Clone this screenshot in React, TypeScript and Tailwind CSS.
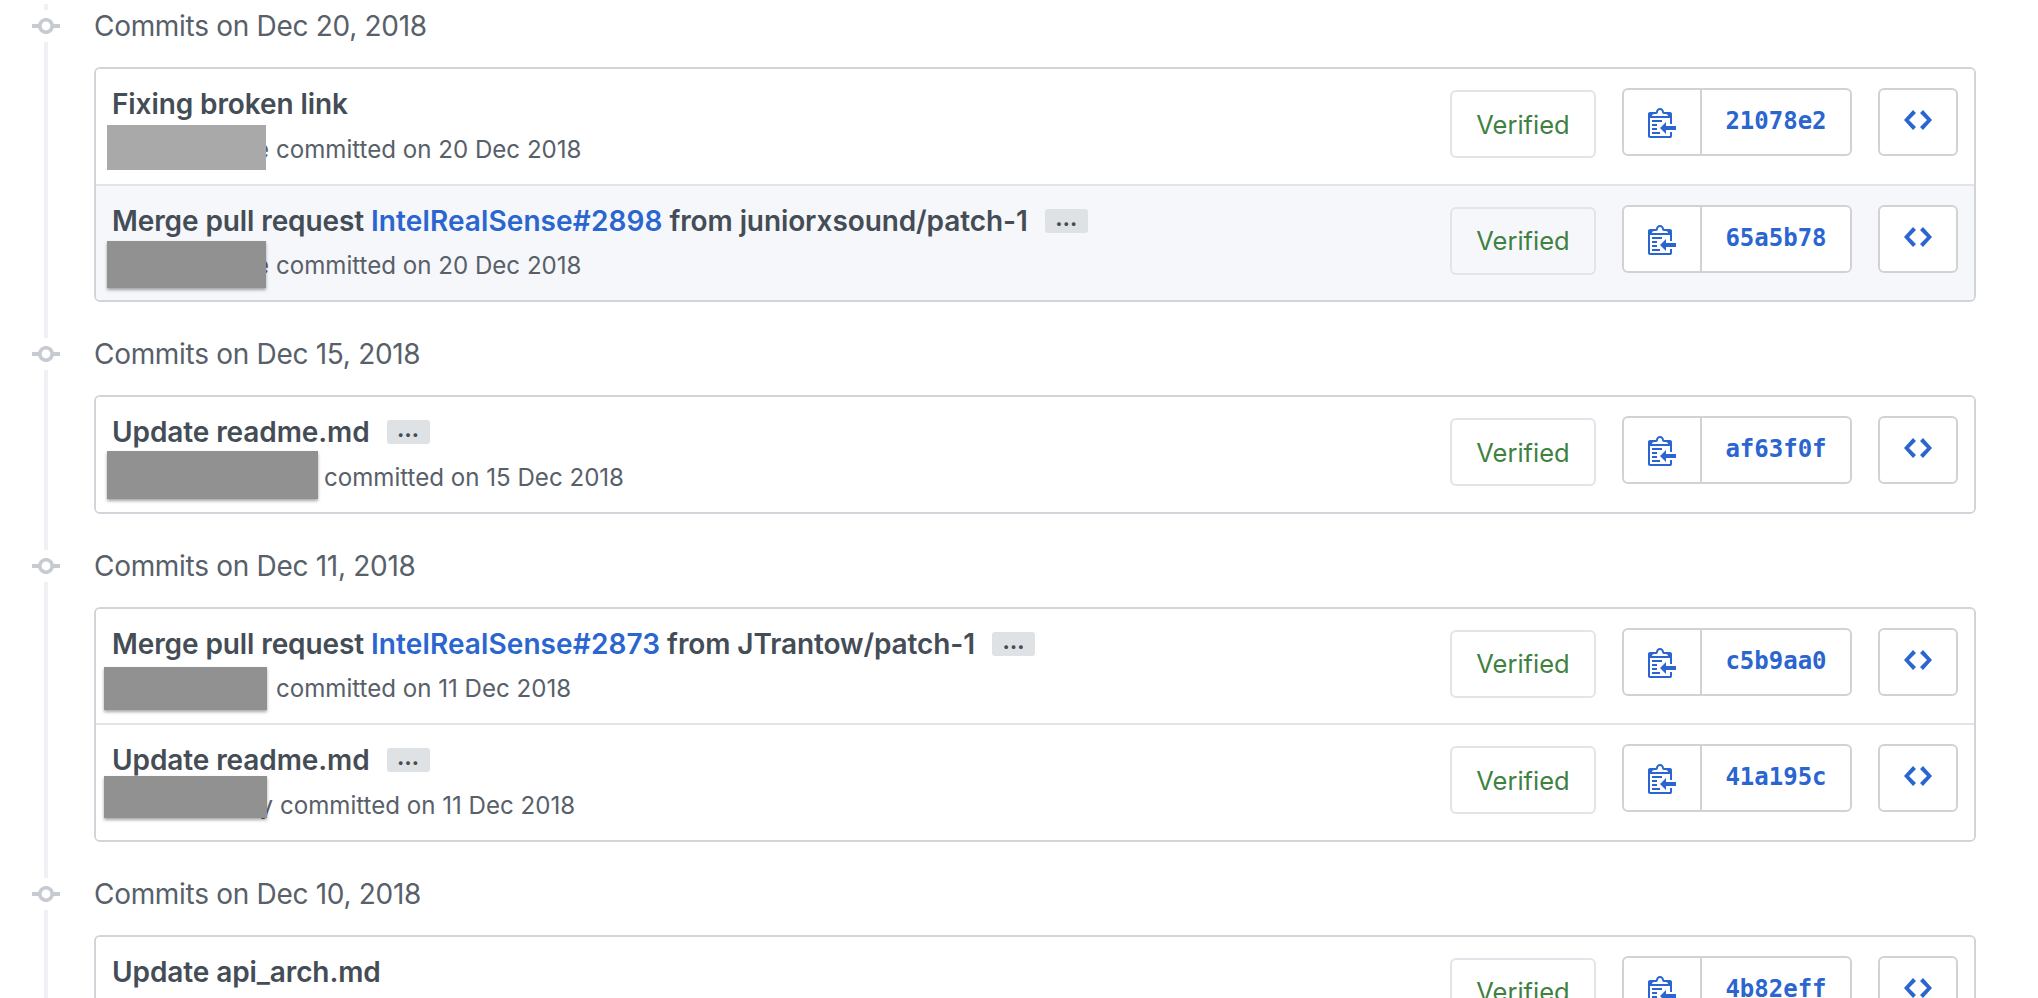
const sans = "font-['Inter','Noto_Sans',sans-serif]";

function CommitIcon() {
  return (
    <svg viewBox="0 0 14 16" className="w-[28px] h-[32px] fill-[#c6cbd1]">
      <path d="M10.86 7c-.45-1.72-2-3-3.86-3-1.86 0-3.41 1.28-3.86 3H0v2h3.14c.45 1.72 2 3 3.86 3 1.86 0 3.41-1.28 3.86-3H14V7h-3.14zM7 10.2c-1.22 0-2.2-.98-2.2-2.2 0-1.22.98-2.2 2.2-2.2 1.22 0 2.2.98 2.2 2.2 0 1.22-.98 2.2-2.2 2.2z" />
    </svg>
  );
}

function ClippyIcon() {
  return (
    <svg viewBox="0 0 14 16" className="w-[28px] h-[32px] fill-[#2a65d0]">
      <path d="M2 13h4v1H2v-1zm5-6H2v1h5V7zm2 3V8l-3 3 3 3v-2h5v-2H9zM4.5 9H2v1h2.5V9zM2 12h2.5v-1H2v1zm9 1h1v2c-.02.28-.11.52-.3.7-.19.18-.42.28-.7.3H1c-.55 0-1-.45-1-1V4c0-.55.45-1 1-1h3c0-1.11.89-2 2-2 1.11 0 2 .89 2 2h3c.55 0 1 .45 1 1v5h-1V6H1v9h10v-2zM2 5h8c0-.55-.45-1-1-1H8c-.55 0-1-.45-1-1s-.45-1-1-1-1 .45-1 1-.45 1-1 1H3c-.55 0-1 .45-1 1z" />
    </svg>
  );
}

function CodeIcon() {
  return (
    <svg viewBox="0 0 14 16" className="w-[28px] h-[32px] fill-[#2a65d0]">
      <path d="M9.5 3L8 4.5 11.5 8 8 11.5 9.5 13 14 8 9.5 3zm-5 0L0 8l4.5 5L6 11.5 2.5 8 6 4.5 4.5 3z" />
    </svg>
  );
}

type Row = {
  before?: string;
  pr?: string;
  after?: string;
  more?: boolean;
  sliver?: string;
  metaClass?: string;
  meta?: string;
  hash: string;
  redact?: string;
  shaded?: boolean;
};

const groups: { date: string; rows: Row[] }[] = [
  {
    date: "Dec 20, 2018",
    rows: [
      {
        before: "Fixing broken link",
        sliver: "e",
        metaClass: "w-[170px]",
        meta: "committed on 20 Dec 2018",
        hash: "21078e2",
        redact: "left-[11px] top-[56px] w-[159px] h-[45px] bg-[#a9a9a9]",
      },
      {
        before: "Merge pull request ",
        pr: "IntelRealSense#2898",
        after: " from juniorxsound/patch-1",
        more: true,
        sliver: "e",
        metaClass: "w-[170px]",
        meta: "committed on 20 Dec 2018",
        hash: "65a5b78",
        shaded: true,
        redact: "left-[11px] top-[55px] w-[159px] h-[47px] bg-[#919191] shadow-[0_2px_3px_rgba(0,0,0,0.35)]",
      },
    ],
  },
  {
    date: "Dec 15, 2018",
    rows: [
      {
        before: "Update readme.md",
        more: true,
        sliver: "",
        metaClass: "w-[218px]",
        meta: "committed on 15 Dec 2018",
        hash: "af63f0f",
        redact: "left-[11px] top-[54px] w-[211px] h-[48px] bg-[#919191] shadow-[0_2px_3px_rgba(0,0,0,0.35)]",
      },
    ],
  },
  {
    date: "Dec 11, 2018",
    rows: [
      {
        before: "Merge pull request ",
        pr: "IntelRealSense#2873",
        after: " from JTrantow/patch-1",
        more: true,
        sliver: "",
        metaClass: "w-[170px]",
        meta: "committed on 11 Dec 2018",
        hash: "c5b9aa0",
        redact: "left-[8px] top-[58px] w-[163px] h-[43px] bg-[#919191] shadow-[0_2px_3px_rgba(0,0,0,0.35)]",
      },
      {
        before: "Update readme.md",
        more: true,
        sliver: "y",
        metaClass: "w-[174px]",
        meta: "committed on 11 Dec 2018",
        hash: "41a195c",
        redact: "left-[8px] top-[51px] w-[163px] h-[42px] bg-[#919191] shadow-[0_2px_3px_rgba(0,0,0,0.35)]",
      },
    ],
  },
  {
    date: "Dec 10, 2018",
    rows: [{ before: "Update api_arch.md", sliver: "", metaClass: "w-[170px]", meta: "", hash: "4b82eff" }],
  },
];

function CommitRow({ row, last }: { row: Row; last: boolean }) {
  return (
    <div
      className={`relative flex items-start h-[114.5px] ${row.shaded ? "bg-[#f6f7fa]" : "bg-white"} ${
        last ? "" : "box-content border-b-2 border-[#e1e4e8]"
      }`}
    >
      <div className="pl-[16px] min-w-0">
        <div className="flex items-center h-[40px] mt-[15px] text-[28px] font-semibold text-[#444d56] whitespace-pre tracking-[-0.1px]">
          <span>
            {row.before}
            {row.pr && <span className="text-[#2a65d0] tracking-[0.1px]">{row.pr}</span>}
            {row.after}
          </span>
          {row.more && (
            <span className="ml-[17px] flex items-center justify-center w-[43px] h-[24px] rounded-[3px] bg-[#dfe2e5] text-[22px] font-bold leading-none pb-[6px]">
              …
            </span>
          )}
        </div>
        <div className="flex items-center h-[40px] mt-[6px] text-[24.1px] text-[#586069] whitespace-pre">
          <span className={`${row.metaClass} -ml-[6px] text-right pr-[7px]`}>{row.sliver}</span>
          <span>{row.meta}</span>
        </div>
      </div>
      {row.redact && <div className={`absolute ${row.redact}`} />}
      <div className="ml-auto flex items-start mt-[19px] mr-[16px]">
        <div className="flex items-center justify-center w-[146px] h-[68px] mt-[2px] pt-[2px] rounded-[6px] border-2 border-[#e1e4e8] text-[25.5px] text-[#3f8141]">
          Verified
        </div>
        <div className="ml-[26px] flex w-[230px] h-[68px] rounded-[6px] border-2 border-[#d2d2d2] bg-white">
          <div className="flex items-center justify-center w-[78px] border-r-2 border-[#d2d2d2]">
            <ClippyIcon />
          </div>
          <div className="flex-1 flex items-center justify-center pb-[2px] font-['DejaVu_Sans_Mono',monospace] font-bold text-[24px] text-[#2a65d0]">
            {row.hash}
          </div>
        </div>
        <div className="ml-[26px] flex items-center justify-center w-[80px] h-[68px] rounded-[6px] border-2 border-[#d2d2d2] bg-white pb-[4px]">
          <CodeIcon />
        </div>
      </div>
    </div>
  );
}

export default function App() {
  return (
    <div className={`h-[998px] overflow-hidden bg-white pt-[4px] pl-[44px] pr-[62px] ${sans}`}>
      {groups.map((g) => (
        <section key={g.date} className="relative border-l-4 border-[#eff1f4] pl-[46px] pb-[30px]">
          <div className="absolute left-[-16px] top-[6px] bg-white flex items-center justify-center h-[32px] w-[28px]">
            <CommitIcon />
          </div>
          <h2 className="flex items-center h-[44px] mb-[19px] text-[28px] tracking-[-0.3px] font-normal text-[#586069]">
            Commits on {g.date}
          </h2>
          <div className="rounded-[6px] border-2 border-[#d1d5da] overflow-hidden">
            {g.rows.map((r, i) => (
              <CommitRow key={r.hash} row={r} last={i === g.rows.length - 1} />
            ))}
          </div>
        </section>
      ))}
    </div>
  );
}
